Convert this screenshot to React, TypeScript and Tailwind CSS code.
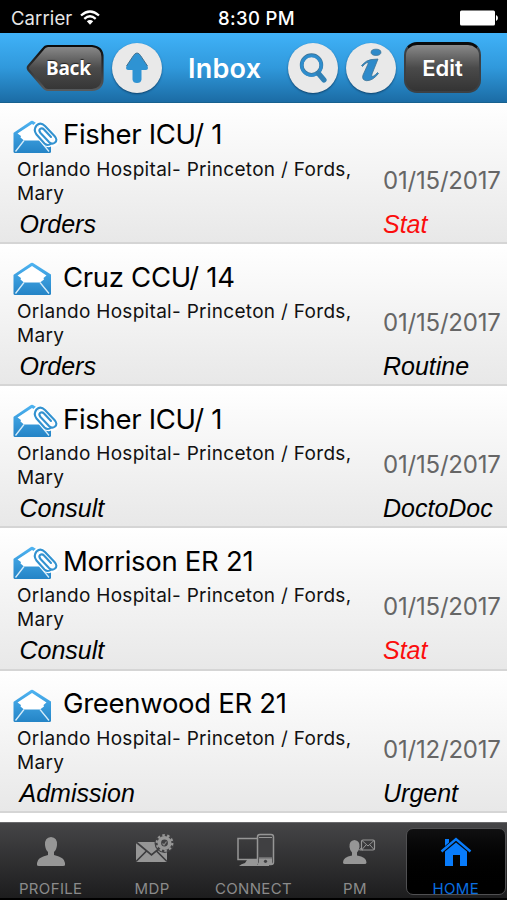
import clsx from "clsx";
import type { ReactNode } from "react";

type Message = {
  id: number;
  title: string;
  hospital: string;
  type: string;
  date: string;
  priority: string;
  attachment: boolean;
};

const HOSPITAL = "Orlando Hospital- Princeton / Fords, Mary";

const MESSAGES: Message[] = [
  { id: 1, title: "Fisher ICU/ 1", hospital: HOSPITAL, type: "Orders", date: "01/15/2017", priority: "Stat", attachment: true },
  { id: 2, title: "Cruz CCU/ 14", hospital: HOSPITAL, type: "Orders", date: "01/15/2017", priority: "Routine", attachment: false },
  { id: 3, title: "Fisher ICU/ 1", hospital: HOSPITAL, type: "Consult", date: "01/15/2017", priority: "DoctoDoc", attachment: true },
  { id: 4, title: "Morrison ER 21", hospital: HOSPITAL, type: "Consult", date: "01/15/2017", priority: "Stat", attachment: true },
  { id: 5, title: "Greenwood ER 21", hospital: HOSPITAL, type: "Admission", date: "01/12/2017", priority: "Urgent", attachment: false },
];

function EnvelopeIcon({ attachment }: { attachment: boolean }) {
  return (
    <svg className="h-[36px] w-[46px] shrink-0" viewBox="0 0 46 36" fill="none" aria-hidden="true">
      <defs>
        <linearGradient id="env" x1="0" y1="0" x2="0" y2="1">
          <stop offset="0" stopColor="#4fb4f2" />
          <stop offset="1" stopColor="#2484c6" />
        </linearGradient>
      </defs>
      <path d="M1 12.500 18 1Q19 .4 20 1L38 12.500V31.500Q38 33 36.500 33H2Q.5 33 .5 31.500V13Z" fill="url(#env)" />
      <path d="M19 4 33.500 13.500 30.500 16 31 17.500 27 20.500H11L7.500 17.500 8 16 4.500 13.500Z" fill="#fff" />
      <path d="M11 20.500 2.500 31.500M27 20.500 36 31.500" stroke="#d5ecfa" strokeWidth="1.300" />
      {attachment && (
        <g strokeLinecap="round" strokeLinejoin="round">
          <path
            d="M28 12 36 20Q39 22.500 37 24.500 35 26 32 23.500L23 14Q19.500 9.500 22.500 6 26.500 1.500 31 5.500L42 17Q45 21 42.500 23.500 40 25.500 37.500 23.500L27 12.500Q24.500 9.500 26.500 8.500 28.500 7.500 30 9.500L37 17"
            stroke="#fff"
            strokeWidth="4.500"
          />
          <path
            d="M38.500 23.500Q34.500 26.500 31.500 23.500L23.500 14.500Q20 10 23.500 5.500 27.500 1.500 32 6L41.500 16Q45 20 42 22.500 39 25 36 22L27.500 13Q25.500 10.500 27 9 29 7.500 31 9.500L38 17"
            stroke="#3292d0"
            strokeWidth="2.100"
          />
        </g>
      )}
    </svg>
  );
}

function StatusBar() {
  return (
    <div className="flex h-[33px] shrink-0 items-center bg-black pt-[4px] text-white">
      <div className="flex w-1/3 items-center gap-[8px] pl-[11px]">
        <span className="text-[18.500px] tracking-[0.100px] text-[#e8e8e8]">Carrier</span>
        <svg className="-mt-[3px] h-[15px] w-[20px]" viewBox="0 0 20 15" fill="none" stroke="#fff" strokeWidth="2.300" aria-hidden="true">
          <path d="M1 5.500Q10-2.500 19 5.500" />
          <path d="M4.300 8.800Q10 3.700 15.700 8.800" />
          <path d="M6.800 11.200Q10 8.600 13.200 11.200L10 14.700Z" fill="#fff" stroke="none" />
        </svg>
      </div>
      <div className="w-1/3 pl-[6px] text-center text-[18.500px] font-medium tracking-[0.350px]">8:30 PM</div>
      <div className="-mt-[1px] flex w-1/3 justify-end pr-[9px]">
        <svg className="h-[16px] w-[38px]" viewBox="0 0 38 16" fill="#fff" aria-hidden="true">
          <rect x="0" y="0.500" width="35" height="15" rx="1.500" />
          <path d="M36 5Q38 6 38 8 38 10 36 11Z" />
        </svg>
      </div>
    </div>
  );
}

function RoundButton({ label, children }: { label: string; children: ReactNode }) {
  return (
    <button
      type="button"
      aria-label={label}
      className="flex size-[50px] shrink-0 items-center justify-center rounded-full bg-[#e9e9e9] shadow-[0_1px_2px_rgba(0,30,60,0.6)]"
    >
      {children}
    </button>
  );
}

function Header() {
  return (
    <header className="relative z-10 flex h-[70px] shrink-0 items-center border-b border-[#17618f] bg-linear-to-b from-[#40b2f8] via-[#3099dc] to-[#1b6ca5] pl-[26px]">
      <button type="button" className="relative h-[48px] w-[78px] shrink-0">
        <svg className="absolute inset-0 size-full" viewBox="0 0 78 48" aria-hidden="true">
          <defs>
            <linearGradient id="back" x1="0" y1="0" x2="0" y2="1">
              <stop offset="0" stopColor="#8b8b8b" />
              <stop offset="0.500" stopColor="#4b4b4b" />
              <stop offset="1" stopColor="#353535" />
            </linearGradient>
            <linearGradient id="backEdge" x1="0" y1="0" x2="0" y2="1">
              <stop offset="0" stopColor="#0b0b0b" />
              <stop offset="1" stopColor="#565a5d" />
            </linearGradient>
          </defs>
          <path
            d="M22 2H66Q76.500 3 76.500 13V35Q76.500 45 66 46H22Q19 46 17 43L2.500 26Q1 24 2.500 22L17 5Q19 2 22 2Z"
            fill="url(#back)"
            stroke="url(#backEdge)"
            strokeWidth="2.200"
          />
        </svg>
        <span className="absolute top-[12px] left-[20px] font-['Noto_Sans',sans-serif] text-[19px] leading-[24px] font-bold tracking-[-0.200px] text-white [text-shadow:0_-1px_1px_#222]">
          Back
        </span>
      </button>

      <div className="ml-[8px]">
        <RoundButton label="Upload">
          <svg className="h-[32px] w-[24px]" viewBox="0 0 24 32" aria-hidden="true">
            <path
              d="M12 1Q14 1 15.500 3.500L22.500 14Q24 18 20.500 18H16.500V27.500Q16 31 12 31 8 31 7.500 27.500V18H3.500Q0 18 1.500 14L8.500 3.500Q10 1 12 1Z"
              fill="#2e93d3"
            />
            <path d="M1.500 14 8.500 3.500Q10 1 12 1 14 1 15.500 3.500L22.500 14" fill="none" stroke="#43718f" strokeWidth="1" />
          </svg>
        </RoundButton>
      </div>

      <h1 className="mt-[3px] ml-[26px] w-[100px] text-[27px] font-semibold tracking-[0.250px] text-white">Inbox</h1>

      <div className="flex gap-[8px]">
        <RoundButton label="Search">
          <svg className="h-[32px] w-[28px]" viewBox="0 0 28 32" fill="none" aria-hidden="true">
            <circle cx="12.500" cy="13" r="9.800" stroke="#3d7599" strokeWidth="3.800" />
            <circle cx="12.500" cy="13.500" r="9.800" stroke="#2e8dcd" strokeWidth="3" />
            <path d="M19.500 21.500 25 28" stroke="#2f80b5" strokeWidth="5.200" strokeLinecap="round" />
          </svg>
        </RoundButton>
        <RoundButton label="Info">
          <svg className="-mt-[5px] h-[34px] w-[22px]" viewBox="0 0 22 34" aria-hidden="true">
            <g fill="#2e8aca" stroke="#3e7395" strokeWidth="0.800">
              <ellipse cx="16" cy="4.300" rx="4.900" ry="3.100" />
              <path d="M1.500 17.500Q6.500 12 11 11.600L18 11 12 26Q11 29.300 13.500 28 15.500 27 17.500 24.500L18.500 25.500Q12.500 33 6.500 32.700 1.300 32 3 27L8 16Q8.700 13.800 7 14.500 4.500 16 2.500 18.500Z" />
            </g>
          </svg>
        </RoundButton>
      </div>

      <button
        type="button"
        className="ml-[8px] h-[51px] w-[77px] shrink-0 rounded-[13px] border-2 border-t-[3px] border-[#3c4044] border-t-[#0b0b0b] bg-linear-to-b from-[#8a8a8a] via-[#4a4a4a] to-[#343434] text-[22px] font-semibold text-white"
      >
        Edit
      </button>
    </header>
  );
}

function MessageRow({ message }: { message: Message }) {
  return (
    <li className="flex h-[142.250px] border-b-2 border-[#d5d5d5] bg-linear-to-b from-white to-[#e8e8e8]">
      <div className="w-[383px] shrink-0">
        <div className="flex pt-[18px] pl-[13px]">
          <EnvelopeIcon attachment={message.attachment} />
          <h2 className="-mt-[1.250px] ml-[4px] text-[27.500px] leading-[32px] tracking-[-0.300px] whitespace-nowrap text-black">
            {message.title}
          </h2>
        </div>
        <p className="mt-[2px] w-[370px] pl-[17px] text-[19px] leading-[24px] tracking-[0.300px] text-[#111]">{message.hospital}</p>
        <p className="mt-[2px] pl-[19.500px] font-['Liberation_Sans',Arial,sans-serif] text-[25px] leading-[32px] text-black italic">
          {message.type}
        </p>
      </div>
      <div className="pt-[63px]">
        <p className="text-[24px] leading-[32px] tracking-[-0.200px] text-[#666]">{message.date}</p>
        <p
          className={clsx(
            "mt-[11px] font-['Liberation_Sans',Arial,sans-serif] text-[25px] leading-[32px] italic",
            message.priority === "Stat" ? "text-[#fb0d0d]" : "text-black"
          )}
        >
          {message.priority}
        </p>
      </div>
    </li>
  );
}

function ProfileIcon() {
  return (
    <svg className="h-[36px] w-[44px] shrink-0" viewBox="0 0 44 36" fill="#969696" aria-hidden="true">
      <path d="M22 4Q28.500 4.500 28 12 27.500 17 25 19V22Q36 24.500 36 30V32Q36 33 34 33H10Q8 33 8 32V30Q8 24.500 19 22V19Q16.500 17 16 12 15.500 4.500 22 4Z" />
    </svg>
  );
}

function MailGearIcon() {
  return (
    <svg className="h-[36px] w-[44px] shrink-0" viewBox="0 0 44 36" fill="none" aria-hidden="true">
      <path d="M6 9H37V29H6Z" fill="#969696" />
      <path d="M6 9 21.500 22 37 9M6 28.500 16.500 18M37 28.500 26.500 18" stroke="#3d3d3f" strokeWidth="1.700" />
      <circle cx="34.500" cy="10" r="10" fill="#404042" />
      <circle cx="34.500" cy="10" r="7.800" stroke="#969696" strokeWidth="2.200" strokeDasharray="2.500 2.400" />
      <circle cx="34.500" cy="10" r="5.200" stroke="#969696" strokeWidth="3.600" />
      <path d="M32.500 10.500 34 12 36.500 8.500" stroke="#858585" strokeWidth="1.200" />
    </svg>
  );
}

function DevicesIcon() {
  return (
    <svg className="h-[36px] w-[44px] shrink-0" viewBox="0 0 44 36" fill="none" aria-hidden="true">
      <path d="M28 5.500H7V26.500H28" stroke="#969696" strokeWidth="1.500" />
      <path d="M16 27H26V31.500H38V33H8Q10 31 14 30Z" fill="#969696" />
      <rect x="26.500" y="1.500" width="16" height="30" rx="2.500" fill="#404042" stroke="#969696" strokeWidth="1.500" />
      <path d="M28 4.500H41M28 25H41" stroke="#969696" strokeWidth="1.200" />
      <path d="M28 25.500H41V31H28Z" fill="#969696" />
      <circle cx="34.500" cy="28.300" r="1.600" fill="#404042" />
    </svg>
  );
}

function PersonMailIcon() {
  return (
    <svg className="h-[36px] w-[44px] shrink-0" viewBox="0 0 44 36" fill="none" aria-hidden="true">
      <path
        d="M21.500 7Q27 7.500 26.500 14 26 18 24 19.500V22.500Q33.500 24 33.500 29.500 33.500 31 31.500 31H12Q10 31 10 29.500 10 24 19 22.500V19.500Q17 18 16.500 14 16 7.500 21.500 7Z"
        fill="#969696"
      />
      <rect x="28.500" y="7" width="13" height="10" rx="1.500" stroke="#969696" strokeWidth="1.200" />
      <path d="M29 7.500 35 13 41 7.500M29 16.500 33 12M41 16.500 37 12M29 14 26.500 17 30 17" stroke="#969696" strokeWidth="1" />
    </svg>
  );
}

function HomeIcon() {
  return (
    <svg className="h-[36px] w-[44px] shrink-0" viewBox="0 0 44 36" fill="#087cfc" aria-hidden="true">
      <path d="M11 6H15V9.500L11 13Z" />
      <path d="M7.500 18.500 22 6 36.500 18.500" fill="none" stroke="#087cfc" strokeWidth="2.400" />
      <path d="M22 9.500 33 18.500V33H26V22H19V33H11V18.500Z" />
    </svg>
  );
}

const TABS: { label: string; icon: ReactNode }[] = [
  { label: "PROFILE", icon: <ProfileIcon /> },
  { label: "MDP", icon: <MailGearIcon /> },
  { label: "CONNECT", icon: <DevicesIcon /> },
  { label: "PM", icon: <PersonMailIcon /> },
  { label: "HOME", icon: <HomeIcon /> },
];

function TabBar({ active }: { active: string }) {
  return (
    <nav className="grid h-[78px] shrink-0 grid-cols-5 border-t border-b-2 border-t-[#6a6a6c] border-b-black bg-linear-to-b from-[#454547] to-[#1d1d1e]">
      {TABS.map((tab) => {
        const isActive = tab.label === active;
        return (
          <div
            key={tab.label}
            className={clsx(
              "flex flex-col items-center",
              isActive
                ? "mt-[5px] mr-px h-[67px] rounded-[7px] border border-[#505052] bg-linear-to-b from-[#101011] to-black pt-[4px] text-[#0a6fe0]"
                : "pt-[10px] text-[#8b8b8b]"
            )}
          >
            {tab.icon}
            <span className="mt-[11px] text-[15px] leading-[18px] tracking-[0.350px]">{tab.label}</span>
          </div>
        );
      })}
    </nav>
  );
}

export default function App() {
  return (
    <div className="flex h-[900px] w-[507px] flex-col overflow-hidden bg-white font-['Inter',sans-serif]">
      <StatusBar />
      <Header />
      <ul className="-mt-[1.500px] min-h-0 flex-1">
        {MESSAGES.map((m) => (
          <MessageRow key={m.id} message={m} />
        ))}
      </ul>
      <TabBar active="HOME" />
    </div>
  );
}
